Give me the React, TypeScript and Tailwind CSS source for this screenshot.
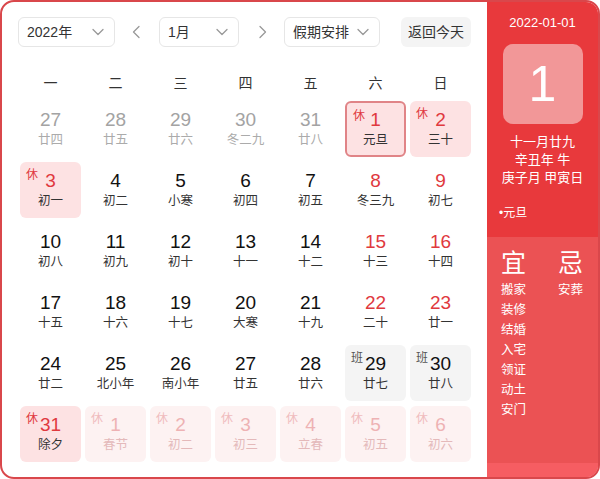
import React from 'react';

type Day = {
  n: number;
  lunar: string;
  kind?: 'prev' | 'next';
  red?: boolean;
  tag?: '休' | '班';
  selected?: boolean;
};

const WEEK = ['一', '二', '三', '四', '五', '六', '日'];

const DAYS: Day[] = [
  { n: 27, lunar: '廿四', kind: 'prev' },
  { n: 28, lunar: '廿五', kind: 'prev' },
  { n: 29, lunar: '廿六', kind: 'prev' },
  { n: 30, lunar: '冬二九', kind: 'prev' },
  { n: 31, lunar: '廿八', kind: 'prev' },
  { n: 1, lunar: '元旦', red: true, tag: '休', selected: true },
  { n: 2, lunar: '三十', red: true, tag: '休' },
  { n: 3, lunar: '初一', red: true, tag: '休' },
  { n: 4, lunar: '初二' },
  { n: 5, lunar: '小寒' },
  { n: 6, lunar: '初四' },
  { n: 7, lunar: '初五' },
  { n: 8, lunar: '冬三九', red: true },
  { n: 9, lunar: '初七', red: true },
  { n: 10, lunar: '初八' },
  { n: 11, lunar: '初九' },
  { n: 12, lunar: '初十' },
  { n: 13, lunar: '十一' },
  { n: 14, lunar: '十二' },
  { n: 15, lunar: '十三', red: true },
  { n: 16, lunar: '十四', red: true },
  { n: 17, lunar: '十五' },
  { n: 18, lunar: '十六' },
  { n: 19, lunar: '十七' },
  { n: 20, lunar: '大寒' },
  { n: 21, lunar: '十九' },
  { n: 22, lunar: '二十', red: true },
  { n: 23, lunar: '廿一', red: true },
  { n: 24, lunar: '廿二' },
  { n: 25, lunar: '北小年' },
  { n: 26, lunar: '南小年' },
  { n: 27, lunar: '廿五' },
  { n: 28, lunar: '廿六' },
  { n: 29, lunar: '廿七', tag: '班' },
  { n: 30, lunar: '廿八', tag: '班' },
  { n: 31, lunar: '除夕', red: true, tag: '休' },
  { n: 1, lunar: '春节', kind: 'next', tag: '休' },
  { n: 2, lunar: '初二', kind: 'next', tag: '休' },
  { n: 3, lunar: '初三', kind: 'next', tag: '休' },
  { n: 4, lunar: '立春', kind: 'next', tag: '休' },
  { n: 5, lunar: '初五', kind: 'next', tag: '休' },
  { n: 6, lunar: '初六', kind: 'next', tag: '休' },
];

const YI = ['搬家', '装修', '结婚', '入宅', '领证', '动土', '安门'];

const Chevron = ({ dir }: { dir: 'down' | 'left' | 'right' }) => {
  const d =
    dir === 'down' ? 'M4 6.5l5 5 5-5' : dir === 'left' ? 'M11 3.5l-5.5 5.5 5.5 5.5' : 'M7 3.5l5.5 5.5-5.5 5.5';
  return (
    <svg width="18" height="18" viewBox="0 0 18 18" fill="none">
      <path d={d} stroke="#999" strokeWidth="1.3" strokeLinecap="round" strokeLinejoin="round" />
    </svg>
  );
};

const Select = ({ label, w }: { label: string; w: string }) => (
  <div
    className={`${w} h-[30px] flex items-center justify-between pl-[8px] pr-[7px] border border-[#e6e6e6] rounded-[6px] bg-white text-[14px] text-[#333]`}
  >
    <span>{label}</span>
    <Chevron dir="down" />
  </div>
);

const Cell = ({ d }: { d: Day }) => {
  let bg = '';
  if (d.kind === 'next') bg = 'bg-[#fdf2f2]';
  else if (d.tag === '休') bg = 'bg-[#fde2e3]';
  else if (d.tag === '班') bg = 'bg-[#f4f4f4]';
  const border = d.selected ? 'border-2 border-[#e08487]' : '';

  let numColor = 'text-[#111]';
  let lunarColor = 'text-[#333]';
  if (d.kind === 'prev') {
    numColor = 'text-[#a3a3a3]';
    lunarColor = 'text-[#ababab]';
  } else if (d.kind === 'next') {
    numColor = 'text-[#eeb2b4]';
    lunarColor = 'text-[#e4b9ba]';
  } else if (d.red) {
    numColor = 'text-[#e0393e]';
  }

  let tagColor = 'text-[#e0393e]';
  if (d.tag === '班') tagColor = 'text-[#555]';
  if (d.kind === 'next') tagColor = 'text-[#f0bcbe]';

  return (
    <div className={`relative h-[56px] rounded-[6px] flex flex-col items-center justify-center ${bg} ${border}`}>
      {d.tag && (
        <span className={`absolute left-[6px] top-[6px] text-[12px] leading-[14px] ${tagColor}`}>{d.tag}</span>
      )}
      <span className={`text-[19px] leading-[22px] ${numColor}`} style={{ fontFamily: '"Liberation Sans", Arial, sans-serif' }}>
        {d.n}
      </span>
      <span className={`text-[12.5px] leading-[18px] ${lunarColor}`}>{d.lunar}</span>
    </div>
  );
};

const App: React.FC = () => {
  return (
    <div
      className="w-[600px] h-[479px] flex border-2 border-[#d9474b] rounded-[14px] overflow-hidden bg-white"
      style={{ fontFamily: '"Liberation Sans", "Noto Sans CJK SC", sans-serif' }}
    >
      {/* calendar */}
      <div className="flex-1 pt-[15px] pl-[16px] pr-[15px]">
        <div className="flex items-center">
          <Select label="2022年" w="w-[97px]" />
          <div className="w-[44px] flex justify-center">
            <Chevron dir="left" />
          </div>
          <Select label="1月" w="w-[80px]" />
          <div className="w-[45px] flex justify-center">
            <Chevron dir="right" />
          </div>
          <Select label="假期安排" w="w-[96px]" />
          <div className="ml-[21px] w-[70px] h-[30px] flex items-center justify-center rounded-[6px] bg-[#f4f4f4] text-[14px] text-[#333]">
            返回今天
          </div>
        </div>

        <div className="grid grid-cols-[repeat(7,61px)] gap-x-[4px] ml-[2px] mt-[21px] h-[30px] items-center">
          {WEEK.map((w) => (
            <div key={w} className="text-center text-[14px] text-[#333]">
              {w}
            </div>
          ))}
        </div>

        <div className="grid grid-cols-[repeat(7,61px)] gap-x-[4px] gap-y-[5px] ml-[2px] mt-[3px]">
          {DAYS.map((d, i) => (
            <Cell key={i} d={d} />
          ))}
        </div>
      </div>

      {/* side panel */}
      <div className="w-[111px] flex flex-col text-white">
        <div className="h-[235px] bg-[#e8393c] flex flex-col items-center pt-[12px]">
          <div className="text-[13px] leading-[18px]">2022-01-01</div>
          <div className="mt-[12px] w-[80px] h-[80px] rounded-[10px] bg-[#f29798] flex items-center justify-center">
            <span className="text-[50px] leading-none" style={{ fontFamily: '"Liberation Sans", Arial, sans-serif' }}>
              1
            </span>
          </div>
          <div className="mt-[9px] text-[13px] leading-[18px] text-center">
            <div>十一月廿九</div>
            <div>辛丑年 牛</div>
            <div>庚子月 甲寅日</div>
          </div>
          <div className="self-start ml-[12px] mt-[18px] text-[12px] leading-[16px]">•元旦</div>
        </div>
        <div className="flex-1 bg-[#eb5254] flex flex-col">
          <div className="flex-1 flex pl-[14px] pt-[10px]">
            <div className="w-[57px]">
              <div className="text-[25px] leading-[32px]">宜</div>
              <div className="text-[12.5px] leading-[20px] mt-[1px]">
                {YI.map((y) => (
                  <div key={y}>{y}</div>
                ))}
              </div>
            </div>
            <div>
              <div className="text-[25px] leading-[32px]">忌</div>
              <div className="text-[12.5px] leading-[20px] mt-[1px]">安葬</div>
            </div>
          </div>
          <div className="h-[14px] bg-[#f65d62]" />
        </div>
      </div>
    </div>
  );
};

export default App;
